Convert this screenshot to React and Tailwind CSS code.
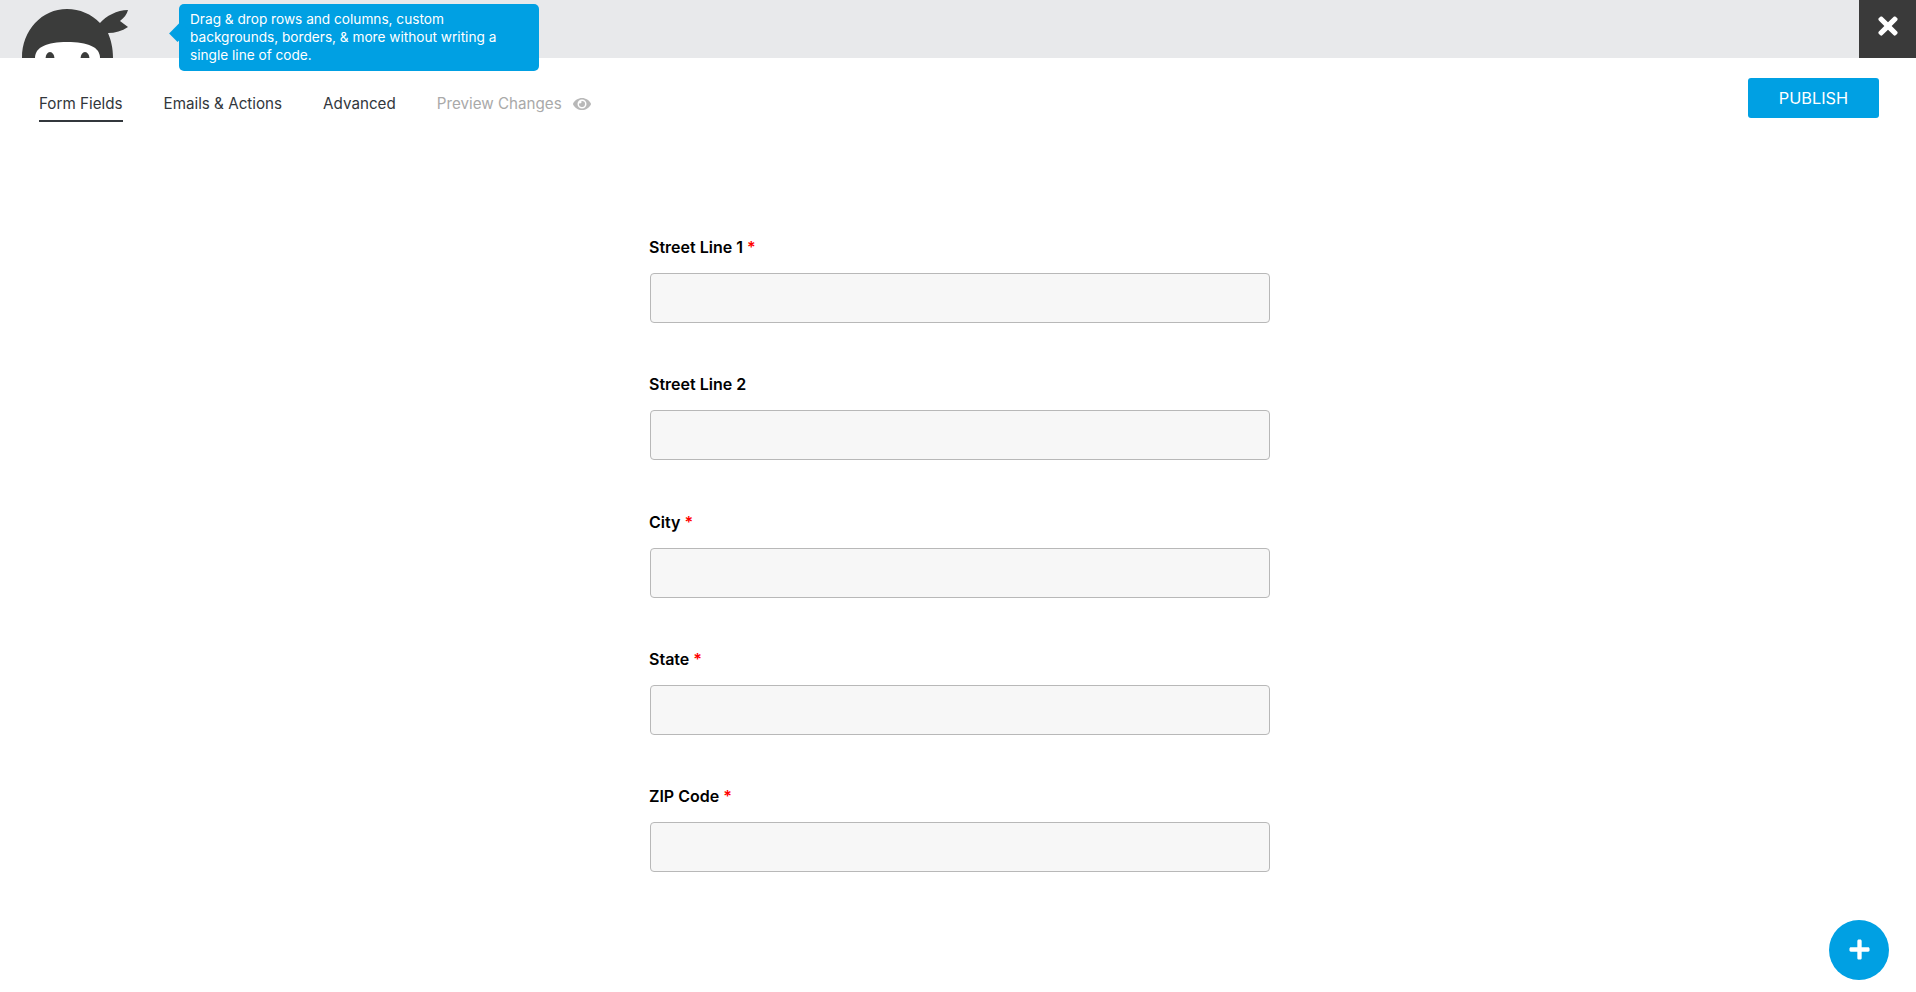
import React from "react";
import { FaEye, FaPlus, FaTimes } from "react-icons/fa";

const fields = [
  { label: "Street Line 1", required: true },
  { label: "Street Line 2", required: false },
  { label: "City", required: true },
  { label: "State", required: true },
  { label: "ZIP Code", required: true },
];

const Logo = () => (
  <svg viewBox="0 0 140 58" className="absolute left-0 top-0 w-[140px] h-[58px]">
    <path d="M22 58 C22 30 42 9 67 9 C80 9 91 14 100 23 C106 16 117 10 128 10 C127 14 124 18 120 21 L128 27 C122 31 115 33 108 33 C111 40 113 48 113 58 Z" fill="#3b3c3b" />
    <path d="M35 58 C35 47 47 42 67 42 C88 42 100 47 100 58 Z" fill="#fff" />
    <ellipse cx="50" cy="59" rx="4.5" ry="7" fill="#3b3c3b" />
    <ellipse cx="85" cy="59" rx="4.5" ry="7" fill="#3b3c3b" />
  </svg>
);

const App = () => {
  return (
    <div className="relative h-[992px] overflow-hidden bg-white font-['Inter',sans-serif]">
      <div className="relative flex h-[58px] justify-end bg-[#e8e9eb]">
        <Logo />
        <button className="flex w-[57px] items-center justify-center bg-[#3a3a3a] pb-[6px] text-white">
          <FaTimes className="text-[28px]" />
        </button>
      </div>

      <div className="absolute left-[179px] top-[4px] w-[360px] rounded-[5px] bg-[#00a0e3] pl-[11px] pr-[20px] pt-[6px] pb-[7px] text-[13.65px] leading-[18px] text-white">
        <span className="absolute left-[-8px] top-[20px] h-[16px] w-[16px] rotate-45 bg-[#00a0e3] scale-x-75"></span>
        <span className="relative">
          Drag &amp; drop rows and columns, custom backgrounds, borders, &amp; more without writing a single line of code.
        </span>
      </div>

      <div className="flex items-start justify-between pl-[39px] pr-[37px] pt-[20px]">
        <div className="flex items-center gap-[41px] pt-[12px] text-[15.2px] text-[#32373c]">
          <a className="border-b-2 border-[#32373c] pb-[4px] pt-[2px] leading-[24px]">Form Fields</a>
          <a className="border-b-2 border-transparent pb-[4px] pt-[2px] leading-[24px]">Emails &amp; Actions</a>
          <a className="border-b-2 border-transparent pb-[4px] pt-[2px] leading-[24px]">Advanced</a>
          <a className="flex items-center gap-[11px] border-b-2 border-transparent pb-[4px] pt-[2px] leading-[24px] text-[#a9a9a9]">
            Preview Changes
            <FaEye className="text-[18px] text-[#b8b8b8]" />
          </a>
        </div>
        <button className="h-[40px] w-[131px] rounded-[3px] bg-[#00a0e3] text-[16.3px] text-white">PUBLISH</button>
      </div>

      <div className="ml-[650px] mt-[115px] flex w-[620px] flex-col gap-[51.25px]">
        {fields.map((field) => (
          <div key={field.label}>
            <label className="-ml-px block h-[36px] text-[16px] font-semibold leading-[20px] text-black">
              {field.label}
              {field.required && <span className="ml-[4px] text-[#ff0000]">*</span>}
            </label>
            <input className="block h-[50px] w-full rounded-[4px] border border-[#b8b8b8] bg-[#f7f7f7]" />
          </div>
        ))}
      </div>

      <button className="absolute bottom-[12px] right-[27px] flex h-[60px] w-[60px] items-center justify-center rounded-full bg-[#00a0e3] pb-[2px] text-white">
        <FaPlus className="text-[23px]" />
      </button>
    </div>
  );
};

export default App;
